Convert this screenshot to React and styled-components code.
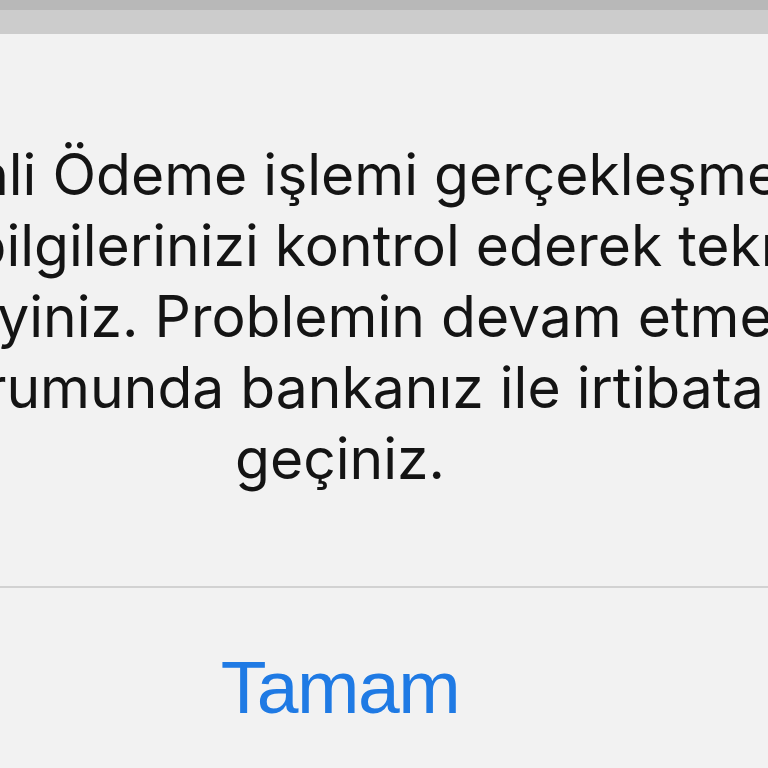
import styled, { createGlobalStyle } from "styled-components";

const GlobalStyle = createGlobalStyle`
  html, body {
    margin: 0;
    padding: 0;
    background: #f2f2f2;
  }
`;

const Screen = styled.div`
  width: 768px;
  height: 768px;
  overflow: hidden;
  display: flex;
  flex-direction: column;
  background: #f2f2f2;
`;

const Backdrop = styled.div`
  height: ${(p) => p.h}px;
  flex-shrink: 0;
  background: ${(p) => p.color};
`;

const AlertColumn = styled.div`
  width: 680px;
  display: flex;
  flex-direction: column;
  align-items: center;
  flex-grow: 1;
`;

const Alert = styled.div`
  width: 1100px;
  flex-shrink: 0;
  display: flex;
  flex-direction: column;
  background: #f2f2f2;
  flex-grow: 1;
`;

const Message = styled.p`
  margin: 0;
  padding: 105px 0 92px;
  font-family: Inter, "Noto Sans", sans-serif;
  font-size: 57px;
  line-height: 71px;
  color: #141414;
  text-align: center;
  white-space: nowrap;
`;

const Divider = styled.div`
  height: 2px;
  background: #d2d2d2;
`;

const Button = styled.button`
  border: none;
  background: transparent;
  padding: 62px 0 0;
  margin: 0;
  font-family: "Liberation Sans", Arial, sans-serif;
  font-size: 75px;
  line-height: 75px;
  letter-spacing: -1.5px;
  color: #1f7ae4;
  text-align: center;
  cursor: pointer;
`;

export default function App() {
  return (
    <>
      <GlobalStyle />
      <Screen>
        <Backdrop h={10} color="#b8b8b8" />
        <Backdrop h={24} color="#cccccc" />
        <AlertColumn>
          <Alert>
            <Message>
              Güvenli Ödeme işlemi gerçekleşmedi.
              <br />
              Kart bilgilerinizi kontrol ederek tekrar
              <br />
              deneyiniz. Problemin devam etmesi
              <br />
              durumunda bankanız ile irtibata
              <br />
              geçiniz.
            </Message>
            <Divider />
            <Button>Tamam</Button>
          </Alert>
        </AlertColumn>
      </Screen>
    </>
  );
}
